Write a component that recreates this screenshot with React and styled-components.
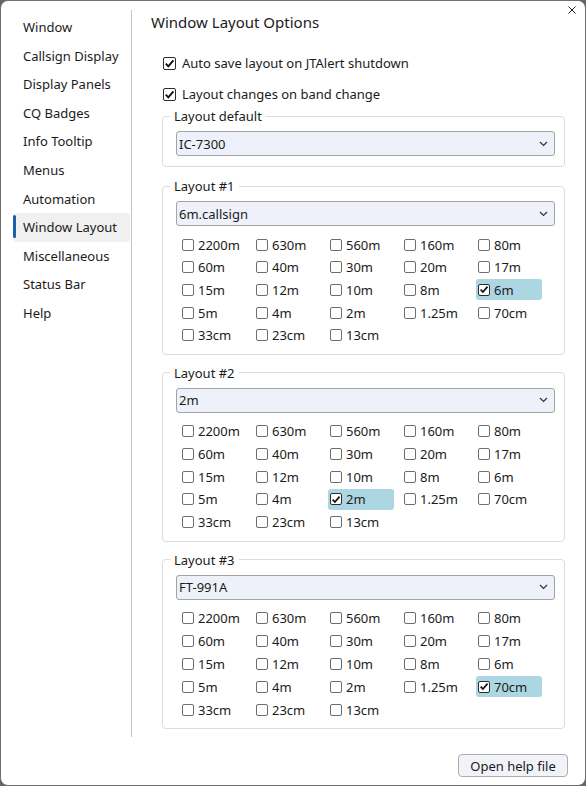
import styled, { createGlobalStyle } from "styled-components"

const GlobalStyle = createGlobalStyle`
    html, body {
        margin: 0;
        padding: 0;
        background: #5d6677;
    }
    body {
        font-family: "Noto Sans", "Open Sans", sans-serif;
        font-size: 13px;
        color: #1b1b1b;
    }
`

export const WindowFrame = styled.div`
    position: relative;
    box-sizing: border-box;
    width: 586px;
    height: 786px;
    background: #ffffff;
    border: 1px solid #6f6f6f;
    border-radius: 8px;
    display: flex;
    flex-direction: column;
    overflow: hidden;
`

export const CloseButton = styled.div`
    position: absolute;
    top: 5px;
    right: 9px;
    width: 8px;
    height: 8px;
    display: flex;
`

export const MainRow = styled.div`
    flex: 1;
    display: flex;
    min-height: 0;
`

export const Sidebar = styled.nav`
    box-sizing: border-box;
    width: 131px;
    margin-top: 9px;
    padding: 3px 1px 0 12px;
    border-right: 1px solid #c4c4c4;
    display: flex;
    flex-direction: column;
`

export const NavItem = styled.div`
    position: relative;
    height: 28.6px;
    line-height: 28.6px;
    padding-left: 10px;
    font-size: 13px;
    border-radius: 3px;
    background: ${ (props) => props.active ? "#f0f0f0" : "transparent" };

    &::before {
        content: "";
        display: ${ (props) => props.active ? "block" : "none" };
        position: absolute;
        left: 0;
        top: 2px;
        width: 3px;
        height: 23px;
        border-radius: 2px;
        background: #1b5fa8;
    }
`

export const Content = styled.div`
    flex: 1;
    display: flex;
    flex-direction: column;
    padding: 11px 20px 0 0;
`

export const Title = styled.h1`
    margin: 0 0 0 19px;
    font-size: 15px;
    font-weight: normal;
    line-height: 20px;
`

export const OptionRow = styled.label`
    display: flex;
    align-items: center;
    gap: 6px;
    height: 20px;
    margin-left: 31px;
    margin-top: ${ (props) => props.top }px;
    font-size: 13px;
`

export const Box = styled.span`
    box-sizing: border-box;
    width: ${ (props) => props.size }px;
    height: ${ (props) => props.size }px;
    flex: none;
    border: 1px solid ${ (props) => props.checked ? "#2b2b2b" : "#6e6e6e" };
    border-radius: 2px;
    background: #ffffff;
    display: flex;
    align-items: center;
    justify-content: center;
`

export const GroupBox = styled.fieldset`
    margin: ${ (props) => props.top }px 0 0 30px;
    padding: 6px 9px ${ (props) => props.bottom }px 13px;
    border: 1px solid #dcdcdc;
    border-radius: 4px;
    min-width: 0;
`

export const GroupLegend = styled.legend`
    margin-left: -6px;
    padding: 0 4px;
    font-size: 13px;
    line-height: 18px;
`

export const Select = styled.div`
    box-sizing: border-box;
    height: 25px;
    border: 1px solid #a3a3a3;
    border-radius: 3px;
    background: #eef1f9;
    display: flex;
    align-items: center;
    justify-content: space-between;
    padding: 0 6px 0 2px;
    font-size: 13px;
`

export const BandGrid = styled.div`
    display: grid;
    grid-template-columns: repeat(5, 66px);
    grid-auto-rows: 21px;
    column-gap: 8px;
    row-gap: ${ (props) => props.rowGap }px;
    margin: 8px 0 0 4px;
`

export const BandCell = styled.div`
    display: flex;
    align-items: center;
    gap: 4px;
    padding-left: 2px;
    border-radius: 3px;
    font-size: 13px;
    background: ${ (props) => props.checked ? "#acd6e2" : "transparent" };
`

export const Footer = styled.div`
    height: 48px;
    box-sizing: border-box;
    display: flex;
    justify-content: flex-end;
    align-items: flex-start;
    padding: 17px 17px 0 0;
`

export const Button = styled.button`
    box-sizing: border-box;
    width: 110px;
    height: 23px;
    border: 1px solid #adadad;
    border-radius: 4px;
    background: #f1f3f9;
    font-family: inherit;
    font-size: 13px;
    color: #1b1b1b;
    padding: 0;
`

const navItems = [
    "Window", "Callsign Display", "Display Panels", "CQ Badges", "Info Tooltip",
    "Menus", "Automation", "Window Layout", "Miscellaneous", "Status Bar", "Help",
]

const bands = [
    "2200m", "630m", "560m", "160m", "80m",
    "60m", "40m", "30m", "20m", "17m",
    "15m", "12m", "10m", "8m", "6m",
    "5m", "4m", "2m", "1.25m", "70cm",
    "33cm", "23cm", "13cm",
]

const layouts = [
    { name: "Layout #1", value: "6m.callsign", band: "6m", top: 10, rowGap: 1.7 },
    { name: "Layout #2", value: "2m", band: "2m", top: 9, rowGap: 1.7 },
    { name: "Layout #3", value: "FT-991A", band: "70cm", top: 9, rowGap: 1.9 },
]

function Check({ checked, size = 13 }) {
    return (
        <Box size={size} checked={checked}>
            {checked && (
                <svg width="11" height="11" viewBox="0 0 11 11">
                    <path d="M1.8 5.6 L4.3 8.3 L9.4 2.4" fill="none" stroke="#111" strokeWidth="1.9" />
                </svg>
            )}
        </Box>
    )
}

function Chevron() {
    return (
        <svg width="9" height="6" viewBox="0 0 9 6">
            <path d="M1 1 L4.5 4.5 L8 1" fill="none" stroke="#333" strokeWidth="1.2" />
        </svg>
    )
}

function LayoutGroup({ name, value, band, top, rowGap }) {
    return (
        <GroupBox top={top} bottom={8}>
            <GroupLegend>{name}</GroupLegend>
            <Select>{value}<Chevron /></Select>
            <BandGrid rowGap={rowGap}>
                {bands.map((b) => (
                    <BandCell key={b} checked={b === band}>
                        <Check size={12} checked={b === band} />
                        {b}
                    </BandCell>
                ))}
            </BandGrid>
        </GroupBox>
    )
}

export default function App() {
    return (
        <>
            <GlobalStyle />
            <WindowFrame>
                <CloseButton>
                    <svg width="8" height="8" viewBox="0 0 8 8">
                        <path d="M0.5 0.5 L7.5 7.5 M7.5 0.5 L0.5 7.5" stroke="#222" strokeWidth="1" />
                    </svg>
                </CloseButton>
                <MainRow>
                    <Sidebar>
                        {navItems.map((item) => (
                            <NavItem key={item} active={item === "Window Layout"}>{item}</NavItem>
                        ))}
                    </Sidebar>
                    <Content>
                        <Title>Window Layout Options</Title>
                        <OptionRow top={21}>
                            <Check checked />
                            Auto save layout on JTAlert shutdown
                        </OptionRow>
                        <OptionRow top={11}>
                            <Check checked />
                            Layout changes on band change
                        </OptionRow>
                        <GroupBox top={3} bottom={10}>
                            <GroupLegend>Layout default</GroupLegend>
                            <Select>IC-7300<Chevron /></Select>
                        </GroupBox>
                        {layouts.map((l) => (
                            <LayoutGroup key={l.name} {...l} />
                        ))}
                    </Content>
                </MainRow>
                <Footer>
                    <Button>Open help file</Button>
                </Footer>
            </WindowFrame>
        </>
    )
}
